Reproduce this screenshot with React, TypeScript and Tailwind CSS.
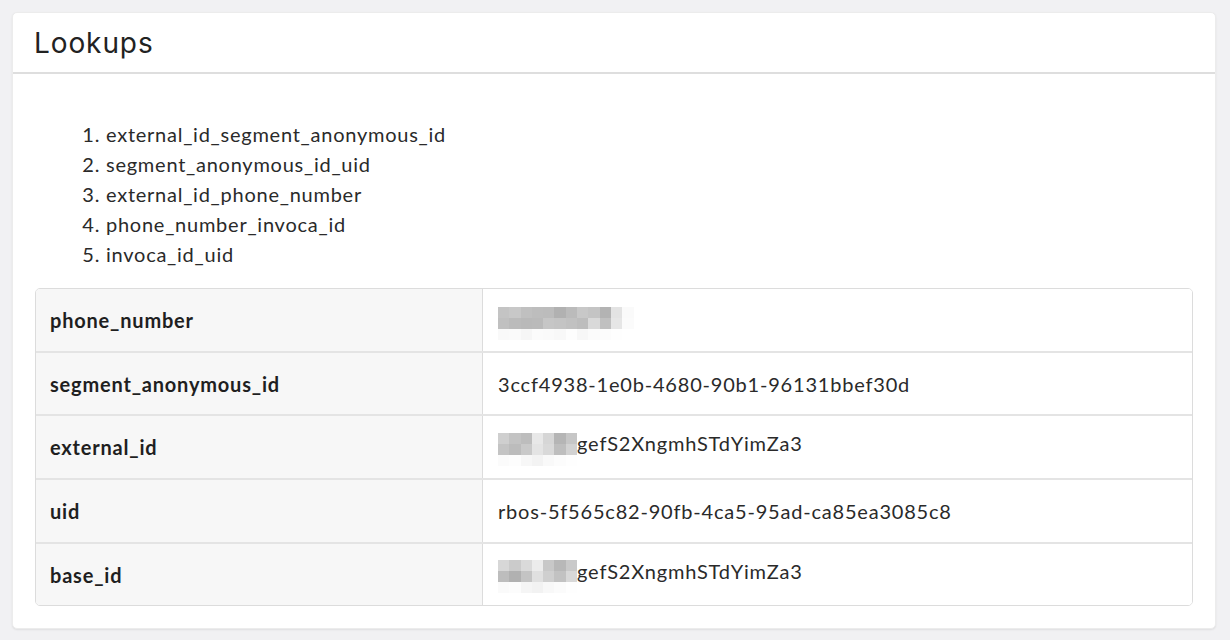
import React from "react";

const phoneBlur = [
  ["#c4c4c4", "#c8c8c8", "#c0c0c0", "#bdbdbd", "#bcbcbc", "#b1b1b1", "#bbbbbb", "#c8c8c8", "#c4c4c4", "#b3b3b3", "#e3e3e3", "#fafafa"],
  ["#c0c0c0", "#bbbbbb", "#b9b9b9", "#bababa", "#c6c6c6", "#c4c4c4", "#c1c1c1", "#bdbdbd", "#d9d9d9", "#c0c0c0", "#e6e6e6", "#fbfbfb"],
  ["#f9f9f9", "#fafafa", "#f6f6f6", "#fbfbfb", "#fafafa", "#f8f8f8", "#fdfdfd", "#f7f7f7", "#fbfbfb", "#fcfcfc", "#fefefe", "#ffffff"],
];

const idBlur = [
  ["#cfcfcf", "#c3c3c3", "#bdbdbd", "#e8e8e8", "#d6d6d6", "#b5b5b5", "#c6c6c6"],
  ["#c4c4c4", "#bcbcbc", "#c9c9c9", "#e4e4e4", "#d9d9d9", "#bebebe", "#d2d2d2"],
  ["#fbfbfb", "#fdfdfd", "#f7f7f7", "#f3f3f3", "#f9f9f9", "#fcfcfc", "#fefefe"],
];

const baseBlur = [
  ["#d7d7d7", "#cbcbcb", "#dadada", "#ececec", "#c8c8c8", "#b8b8b8", "#c9c9c9"],
  ["#bdbdbd", "#b1b1b1", "#c4c4c4", "#e0e0e0", "#cfcfcf", "#c2c2c2", "#d8d8d8"],
  ["#fafafa", "#fcfcfc", "#f5f5f5", "#f2f2f2", "#f8f8f8", "#fbfbfb", "#fefefe"],
];

function Blur({ cells }: { cells: string[][] }) {
  return (
    <span className="inline-flex flex-col align-middle">
      {cells.map((row, i) => (
        <span key={i} className="flex">
          {row.map((c, j) => (
            <span key={j} className="block w-[11.3px] h-[11px]" style={{ background: c }} />
          ))}
        </span>
      ))}
    </span>
  );
}

const lookups = [
  "external_id_segment_anonymous_id",
  "segment_anonymous_id_uid",
  "external_id_phone_number",
  "phone_number_invoca_id",
  "invoca_id_uid",
];

export default function App() {
  const rows: { key: string; h: string; value: React.ReactNode }[] = [
    { key: "phone_number", h: "h-[62px]", value: <span className="pt-[6px] block"><Blur cells={phoneBlur} /></span> },
    { key: "segment_anonymous_id", h: "h-[61px]", value: "3ccf4938-1e0b-4680-90b1-96131bbef30d" },
    {
      key: "external_id",
      h: "h-[62px]",
      value: (
        <span className="flex items-start">
          <span className="pt-[3px]"><Blur cells={idBlur} /></span>
          <span>gefS2XngmhSTdYimZa3</span>
        </span>
      ),
    },
    { key: "uid", h: "h-[62px]", value: "rbos-5f565c82-90fb-4ca5-95ad-ca85ea3085c8" },
    {
      key: "base_id",
      h: "h-[61px]",
      value: (
        <span className="flex items-start">
          <span className="pt-[3px]"><Blur cells={baseBlur} /></span>
          <span>gefS2XngmhSTdYimZa3</span>
        </span>
      ),
    },
  ];

  return (
    <div className="min-h-screen bg-[#f1f1f3] p-[12px] pr-[14px]" style={{ fontFamily: "Lato, 'Noto Sans', sans-serif" }}>
      <div className="bg-white rounded-[5px] shadow-[0_1px_2px_rgba(0,0,0,0.08)] border border-[#ececec]">
        <div className="h-[61px] flex items-center px-[21px] border-b-2 border-[#dedede]">
          <h1 className="text-[28px] text-[#222] tracking-[0.9px]" style={{ fontFamily: "Inter, 'Noto Sans', sans-serif" }}>
            Lookups
          </h1>
        </div>
        <div className="px-[22px] pt-[45px] pb-[22px]">
          <ol className="list-decimal pl-[71px] text-[20px] leading-[30px] tracking-[0.75px] text-[#2a2a2a]">
            {lookups.map((l) => (
              <li key={l}>{l}</li>
            ))}
          </ol>
          <div className="mt-[19px] border border-[#dcdcdc] rounded-[5px] overflow-hidden text-[20px] tracking-[0.8px] text-[#2a2a2a]">
            {rows.map((r, i) => (
              <div key={r.key} className={`grid grid-cols-[447px_1fr] ${i > 0 ? "border-t-2 border-[#e4e4e4]" : ""}`}>
                <div className={`${r.h} flex items-center px-[14px] bg-[#f7f7f7] font-bold text-[#1f1f1f] border-r border-[#dcdcdc]`}>
                  {r.key}
                </div>
                <div className={`${r.h} flex items-center px-[15px] bg-white`}>{r.value}</div>
              </div>
            ))}
          </div>
        </div>
      </div>
    </div>
  );
}
